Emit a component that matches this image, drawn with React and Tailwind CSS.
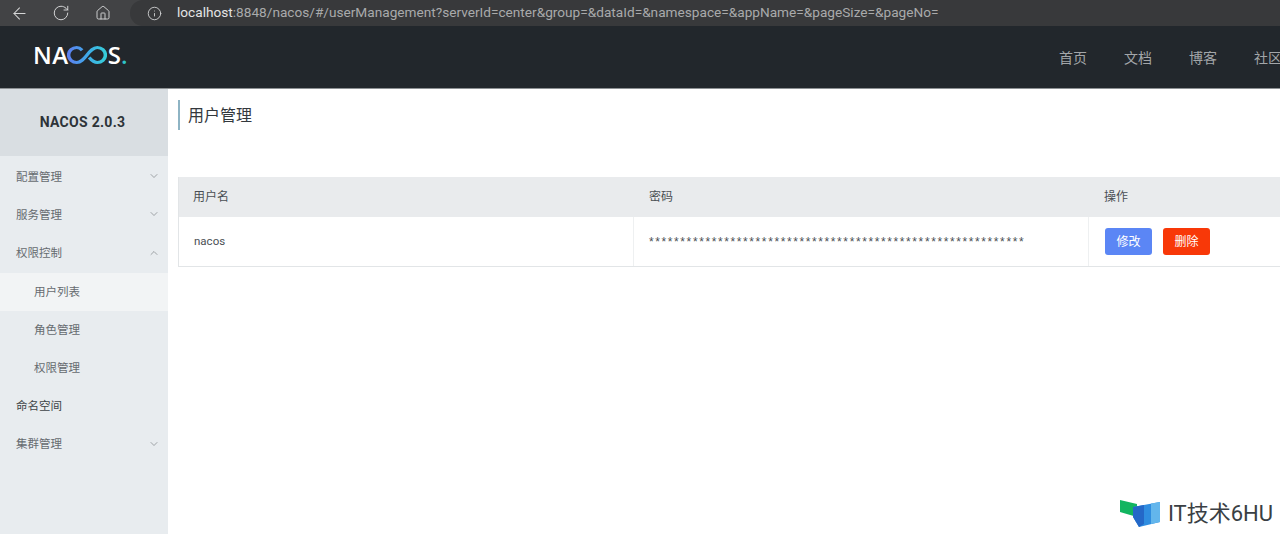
import React from "react";
import { ArrowLeft, RotateCw, Home, Info, ChevronDown, ChevronUp } from "lucide-react";

const FONT = "font-['Roboto','Noto_Sans_CJK_SC',sans-serif]";

const MENU = [
  { label: "配置管理", arrow: "down" },
  { label: "服务管理", arrow: "down" },
  { label: "权限控制", arrow: "up" },
  { label: "用户列表", sub: true, active: true },
  { label: "角色管理", sub: true },
  { label: "权限管理", sub: true },
  { label: "命名空间", dark: true },
  { label: "集群管理", arrow: "down" },
];

function Logo() {
  return (
    <div className="mb-[4px] flex items-center font-['Open_Sans',sans-serif] text-[24px] leading-none font-semibold text-white">
      <span className="tracking-[0.5px]">NA</span>
      <svg width="40" height="20" viewBox="0 0 37 20" fill="none" preserveAspectRatio="none" className="-ml-[2px]">
        <defs>
          <linearGradient id="nacosLoop" x1="0" y1="0" x2="37" y2="0" gradientUnits="userSpaceOnUse">
            <stop offset="0" stopColor="#5f7cf0" />
            <stop offset="0.5" stopColor="#3fa9e8" />
            <stop offset="1" stopColor="#35d0d8" />
          </linearGradient>
        </defs>
        <path
          d="M14 5.2C12.6 3.6 11 2.5 9 2.5A7.5 7.5 0 0 0 9 17.5C13 17.5 15.5 14 18.5 10C21.5 6 24 2.5 28 2.5A7.5 7.5 0 0 1 28 17.5C24.5 17.5 22.5 15 20.5 12.5"
          stroke="url(#nacosLoop)"
          strokeWidth="3.2"
        />
      </svg>
      <span className="ml-[1px]">S</span>
      <span className="text-[#2fc4c9]">.</span>
    </div>
  );
}

function BrowserBar() {
  return (
    <div className="flex h-[26px] shrink-0 items-center bg-[#424345] text-[#d5d6d7]">
      <div className="flex w-[130px] shrink-0 items-center">
        <ArrowLeft size={19} strokeWidth={1.3} className="ml-[10px]" />
        <RotateCw size={18} strokeWidth={1.3} className="ml-[23px]" />
        <Home size={16} strokeWidth={1.4} className="ml-[25px]" />
      </div>
      <div className="flex h-full flex-1 items-center rounded-l-[13px] bg-[#38393b] pl-[17px]">
        <Info size={15} strokeWidth={1.4} />
        <div className="ml-[15px] text-[13.65px] leading-none whitespace-nowrap text-[#a9aaab]">
          <span className="text-[#e4e4e5]">localhost</span>
          :8848/nacos/#/userManagement?serverId=center&amp;group=&amp;dataId=&amp;namespace=&amp;appName=&amp;pageSize=&amp;pageNo=
        </div>
      </div>
    </div>
  );
}

function Header() {
  return (
    <div className="flex h-[63px] shrink-0 items-center justify-between border-b border-[#8d9194] bg-[#22272c] pl-[33px]">
      <Logo />
      <div className="flex w-[221px] shrink-0 gap-[37px] overflow-hidden pt-[2px] text-[14px] whitespace-nowrap text-[#a3a6a9]">
        <span>首页</span>
        <span>文档</span>
        <span>博客</span>
        <span>社区</span>
      </div>
    </div>
  );
}

function Sidebar() {
  return (
    <div className="w-[168px] shrink-0 bg-[#e8ecef]">
      <div className="flex h-[67px] items-center justify-center bg-[#d9dee2] pr-[3px] text-[14px] font-bold tracking-[0.3px] text-[#2d3338]">
        NACOS 2.0.3
      </div>
      <div className="pt-[2.6px]">
        {MENU.map((m) => (
          <div
            key={m.label}
            className={`flex h-[38.2px] items-center justify-between pr-[8px] text-[11.5px] ${m.sub ? "pl-[34px]" : "pl-[16px]"} ${m.active ? "bg-[#f2f4f5]" : ""} ${m.dark ? "text-[#3f4448]" : "text-[#666b70]"}`}
          >
            <span>{m.label}</span>
            {m.arrow === "down" && <ChevronDown size={12} strokeWidth={1.2} className="mb-[3px] text-[#6b7074]" />}
            {m.arrow === "up" && <ChevronUp size={12} strokeWidth={1.2} className="mb-[3px] text-[#6b7074]" />}
          </div>
        ))}
      </div>
    </div>
  );
}

function UserTable() {
  return (
    <div className="mt-[47px] w-[1120px] border-b border-l border-[#e2e5e7] text-[12px] text-[#4a4f54]">
      <div className="grid h-[40px] grid-cols-[455px_455px_1fr] items-center bg-[#e9ebed]">
        <div className="pl-[14px]">用户名</div>
        <div className="pl-[15px]">密码</div>
        <div className="pl-[15px]">操作</div>
      </div>
      <div className="grid h-[49px] grid-cols-[455px_455px_1fr] items-center">
        <div className="flex h-full items-center border-r border-[#eef0f1] pl-[15px] text-[11.5px]">nacos</div>
        <div className="flex h-full items-center border-r border-[#eef0f1] pl-[15px] font-['Liberation_Sans',sans-serif] text-[12px] tracking-[1.6px]">
          ************************************************************
        </div>
        <div className="flex items-center gap-[11px] pl-[16px]">
          <button className="h-[27px] w-[47px] rounded-[3px] bg-[#5b86f5] text-[12px] text-white">修改</button>
          <button className="h-[27px] w-[47px] rounded-[3px] bg-[#f83808] text-[12px] text-white">删除</button>
        </div>
      </div>
    </div>
  );
}

function Watermark() {
  return (
    <div className="absolute right-[7px] bottom-[5px] flex items-center gap-[8px]">
      <svg width="40" height="30" viewBox="0 0 40 30">
        <path d="M0 1L17 5V18L0 13Z" fill="#12b560" />
        <path d="M13 8L40 3V23L19 28L13 18Z" fill="#2f8de0" />
        <path d="M13 8L24 6V25L19 28L13 18Z" fill="#2468c8" />
        <path d="M31 4.5L40 3V23L31 25Z" fill="#63b6ec" />
      </svg>
      <span className="text-[22px] leading-none text-[#3a3f44]">IT技术6HU</span>
    </div>
  );
}

export default function App() {
  return (
    <div className={`relative flex h-[534px] w-[1280px] flex-col overflow-hidden bg-white ${FONT}`}>
      <BrowserBar />
      <Header />
      <div className="flex min-h-0 flex-1">
        <Sidebar />
        <div className="min-w-0 flex-1 pt-[11px] pl-[10px]">
          <div className="flex h-[30px] items-center border-l-2 border-[#8eb4c4] pt-[2px] pl-[8px] text-[16px] text-[#33383d]">
            用户管理
          </div>
          <UserTable />
        </div>
      </div>
      <Watermark />
    </div>
  );
}
